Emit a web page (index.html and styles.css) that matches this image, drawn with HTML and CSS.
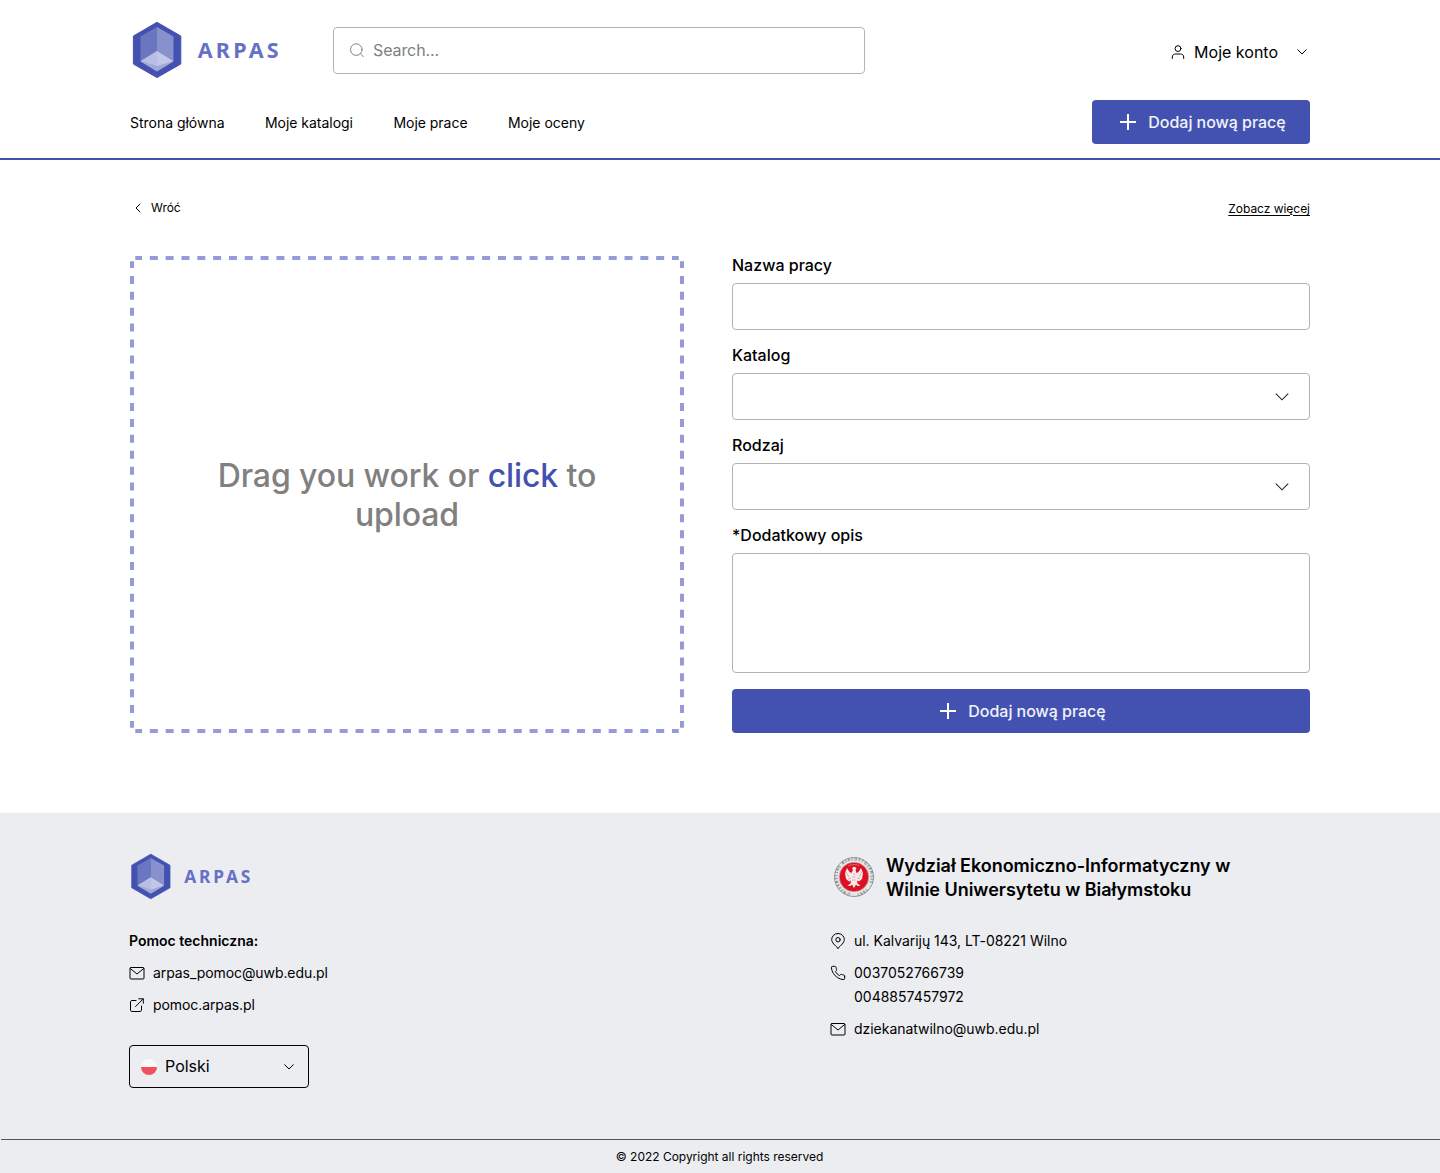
FILE: index.html
```html
<!DOCTYPE html>
<html lang="pl">
<head>
<meta charset="utf-8">
<title>ARPAS</title>
<link rel="stylesheet" href="styles.css">
</head>
<body>
<svg class="sprite" aria-hidden="true">
  <symbol id="chevron" viewBox="0 0 16 16"><path d="M3.700 5.700 8 10 12.300 5.700"/></symbol>
  <symbol id="mail" viewBox="0 0 16 16"><rect x="1" y="2.500" width="14" height="11.500" rx="1"/><path d="M1.300 3.500 8 9l6.700-5.500"/></symbol>
  <symbol id="plus" viewBox="0 0 16 16"><path d="M8 0v16M0 8h16"/></symbol>
  <symbol id="logo" viewBox="0 0 150 58">
    <path fill="#4352b0" stroke="#4352b0" stroke-linejoin="round" d="M27 1.300 50.800 15v28L27 56.600 3.400 43V15Z"/>
    <path fill="#6b76c1" d="M27 6 10.500 15.500V40L27 30Z"/>
    <path fill="#8890ce" d="M27 6 43.500 15.500V40L27 30Z"/>
    <path fill="#a2a9d9" d="M27 30 10.500 40.500 27 50.500 43.500 40.500Z"/>
    <path fill="#b9bee2" d="M27 30 10.500 40 27 45Z"/>
    <path fill="#c3c7e7" d="M27 30 43.500 40 27 45Z"/>
  </symbol>
</svg>

<header class="header">
  <div class="container">
    <div class="header-top">
      <svg class="logo" viewBox="0 0 150 58"><use href="#logo"/><text class="logo-text" x="67.700" y="36.700" textLength="81">ARPAS</text></svg>
      <div class="search">
        <svg class="icon" viewBox="0 0 16 16"><circle cx="7.300" cy="7.600" r="5.800"/><path d="m11.500 11.800 2.900 2.900"/></svg>
        <span>Search...</span>
      </div>
      <div class="account">
        <svg class="icon" viewBox="0 0 16 16"><circle cx="8" cy="4.600" r="2.900"/><path d="M2.300 14.500V13c0-2 1.500-3 3.200-3h5c1.700 0 3.200 1 3.200 3v1.500"/></svg>
        <span>Moje konto</span>
        <svg class="icon account-arrow"><use href="#chevron"/></svg>
      </div>
    </div>
    <div class="header-bottom">
      <nav class="nav"><a>Strona główna</a><a>Moje katalogi</a><a>Moje prace</a><a>Moje oceny</a></nav>
      <button class="button button-header"><svg class="plus"><use href="#plus"/></svg><span>Dodaj nową pracę</span></button>
    </div>
  </div>
</header>

<main class="container main">
  <div class="links">
    <a class="back"><svg class="icon" viewBox="0 0 16 16"><path d="M10 4 6 8l4 4"/></svg><span>Wróć</span></a>
    <a class="more">Zobacz więcej</a>
  </div>
  <div class="columns">
    <div class="dropzone">
      <svg class="dashes" viewBox="0 0 554 477">
        <path class="dash-x" d="M5.300 2H548.700M5.300 475H548.700"/>
        <path class="dash-y" d="M2 5.300V471.700M552 5.300V471.700"/>
      </svg>
      <p>Drag you work or <b>click</b> to upload</p>
    </div>
    <form class="form">
      <label>Nazwa pracy</label>
      <div class="field"></div>
      <label>Katalog</label>
      <div class="field"><svg class="select-arrow"><use href="#chevron"/></svg></div>
      <label>Rodzaj</label>
      <div class="field"><svg class="select-arrow"><use href="#chevron"/></svg></div>
      <label>*Dodatkowy opis</label>
      <div class="field area"></div>
      <button type="button" class="button"><svg class="plus"><use href="#plus"/></svg><span>Dodaj nową pracę</span></button>
    </form>
  </div>
</main>

<footer class="footer">
  <div class="footer-main">
    <section class="support">
      <svg class="footer-logo" viewBox="0 0 150 58"><use href="#logo"/><text class="logo-text" x="68.500" y="36.700" textLength="82">ARPAS</text></svg>
      <h3>Pomoc techniczna:</h3>
      <div class="contact"><svg class="icon"><use href="#mail"/></svg><span class="support-link">arpas_pomoc@uwb.edu.pl</span></div>
      <div class="contact"><svg class="icon" viewBox="0 0 16 16"><path d="M7 3.500H2.800c-.7 0-1.300.6-1.300 1.300v8.400c0 .7.6 1.300 1.300 1.300h8.400c.7 0 1.300-.6 1.300-1.300V9M9.800 1.800h4.500v4.500M14.100 2 6.500 9.600"/></svg><span class="support-link">pomoc.arpas.pl</span></div>
      <div class="language">
        <svg class="flag" viewBox="0 0 16 16"><path fill="#f9f9f9" d="M0 8a8 8 0 0 1 16 0Z"/><path fill="#f05060" d="M0 8a8 8 0 0 0 16 0Z"/></svg>
        <span>Polski</span>
        <svg class="icon"><use href="#chevron"/></svg>
      </div>
    </section>
    <section class="faculty">
      <div class="faculty-head">
        <svg class="crest" viewBox="0 0 40 40">
          <defs><path id="ring" d="M20 36.600a16.600 16.600 0 1 1 .1 0"/></defs>
          <circle cx="20" cy="20" r="19.500" fill="#e8e8e9" stroke="#999"/>
          <text class="crest-text"><textPath href="#ring" textLength="101">· UNIVERSITAS BIALOSTOCENSIS · 1997</textPath></text>
          <circle cx="20" cy="20" r="14.800" fill="#dc1022" stroke="#bbb" stroke-width=".7"/>
          <path fill="#f6e9e8" d="m18 11 2-1.500 2.500 1.500-1 2 1 3 2-1 2.500-4 2 5-1 6-3 2.500-2-1 .5 3 3 2-3 .5-1.500-1.500L20 31l-2-3.500-1.500 1.500-3-.5 3-2 .5-3-2 1-3-2.500-1-6 2-5 2.500 4 2 1 1.500-3Z"/>
          <path fill="none" stroke="#d98087" stroke-width=".6" d="m12 15 3 5M28 15l-3 5M14 22l3-1M26 22l-3-1M19 17h2M18.500 20h3M18.500 23h3"/>
          <path fill="none" stroke="#f0a0a0" stroke-dasharray="1 .6" d="M14.500 8.800q5.500-2.600 11 0"/>
        </svg>
        <h2>Wydział Ekonomiczno-Informatyczny w<br>Wilnie Uniwersytetu w Białymstoku</h2>
      </div>
      <div class="contact"><svg class="icon" viewBox="0 0 16 16"><path d="M8 15.300C5 12.300 1.700 9.700 1.700 6.500a6.300 6 0 0 1 12.600 0C14.300 9.700 11 12.300 8 15.300Z"/><circle cx="8" cy="6.700" r="2.200"/></svg><span>ul. Kalvarijų 143, LT-08221 Wilno</span></div>
      <div class="contact"><svg class="icon" viewBox="0 0 24 24"><path class="phone" d="M22 16.920v3a2 2 0 0 1-2.180 2 19.790 19.790 0 0 1-8.630-3.070 19.500 19.500 0 0 1-6-6 19.790 19.790 0 0 1-3.070-8.670A2 2 0 0 1 4.110 2h3a2 2 0 0 1 2 1.720 12.840 12.840 0 0 0 .7 2.810 2 2 0 0 1-.45 2.110L8.090 9.910a16 16 0 0 0 6 6l1.270-1.270a2 2 0 0 1 2.110-.45 12.840 12.840 0 0 0 2.810.7A2 2 0 0 1 22 16.920z"/></svg><span class="phones">0037052766739<br>0048857457972</span></div>
      <div class="contact"><svg class="icon"><use href="#mail"/></svg><span>dziekanatwilno@uwb.edu.pl</span></div>
    </section>
  </div>
  <div class="copyright">© 2022 Copyright all rights reserved</div>
</footer>
</body>
</html>
```

FILE: styles.css
```css
* { box-sizing: border-box; }
body { margin: 0; background: #fff; color: #000; font-family: Inter, "Liberation Sans", sans-serif; font-size: 14px; }
h2, h3, p { margin: 0; }
svg { display: block; flex: none; }
.sprite { position: absolute; width: 0; height: 0; }
.container { width: 1180px; margin: 0 auto; }
.icon { width: 16px; height: 16px; fill: none; stroke: currentColor; stroke-width: 1; stroke-linecap: round; stroke-linejoin: round; }
.phone { stroke-width: 1.5; }

.header { height: 160px; padding-top: 20px; border-bottom: 2px solid #4352b0; }
.header-top { display: flex; align-items: center; height: 60px; }
.logo { width: 150px; height: 58px; overflow: visible; }
.logo-text { font: 700 21.5px "Noto Sans", sans-serif; fill: #6670c6; }
.search { display: flex; align-items: center; gap: 8px; width: 532px; height: 47px; margin: 1px 0 0 53px; padding: 0 15px 1px; border: 1px solid #b3b3b3; border-radius: 4px; color: #808080; font-size: 16px; letter-spacing: -.1px; }
.account { display: flex; align-items: center; gap: 8px; margin: 3px 0 0 auto; font-size: 16px; }
.account-arrow { margin-left: 8px; }
.header-bottom { display: flex; align-items: center; justify-content: space-between; margin-top: 20px; height: 44px; }
.nav { display: flex; gap: 40.4px; letter-spacing: -.02px; }
.button { display: flex; align-items: center; justify-content: center; gap: 12px; height: 44px; padding: 0 0 0 4px; border: 0; border-radius: 4px; background: #4352b0; color: #f2f2fa; font: 500 16px Inter, "Liberation Sans", sans-serif; letter-spacing: -.03px; }
.button span { padding-bottom: 1px; }
.button-header { width: 218px; }
.plus { width: 16px; height: 16px; stroke: #fff; stroke-width: 2; }

.main { height: 653px; padding-top: 40px; }
.links { display: flex; justify-content: space-between; height: 16px; font-size: 12px; line-height: 16px; letter-spacing: -.03px; }
.back { display: flex; gap: 5px; }
.more { height: 16px; line-height: 17px; text-decoration: underline; text-underline-offset: 2px; }
.columns { display: flex; gap: 48px; margin-top: 40px; }
.dropzone { display: grid; place-items: center; width: 554px; height: 477px; }
.dropzone > * { grid-area: 1 / 1; }
.dashes { width: 554px; height: 477px; fill: none; stroke: #959bd8; stroke-width: 4; }
.dash-x { stroke-dasharray: 8 7.823; stroke-dashoffset: 1.3; }
.dash-y { stroke-dasharray: 8 7.897; stroke-dashoffset: 1.3; }
.dropzone p { width: 400px; color: #808080; font-size: 32px; font-weight: 500; line-height: 39px; letter-spacing: -.1px; text-align: center; }
.dropzone b { color: #4352b0; font-weight: 500; }
.form { display: flex; flex-direction: column; width: 578px; }
.form label { height: 19px; margin-bottom: 8px; font-size: 16px; font-weight: 500; line-height: 19px; }
.field { display: flex; align-items: center; justify-content: flex-end; height: 47px; margin-bottom: 16px; padding-right: 16px; border: 1px solid #b3b3b3; border-radius: 4px; }
.area { height: 120px; }
.select-arrow { width: 22px; height: 22px; fill: none; stroke: #222; stroke-width: .75; stroke-linecap: round; }

.footer { height: 360px; background: #ecedf1; }
.footer-main { display: flex; width: 1182px; height: 326px; margin: 0 auto; padding-top: 40px; }
.support { width: 701px; }
.footer-logo { width: 121px; height: 47px; margin-bottom: 29px; overflow: visible; }
.footer h3 { margin-bottom: 8px; font-size: 14px; font-weight: 600; line-height: 24px; }
.contact { display: flex; gap: 8px; margin-bottom: 8px; line-height: 24px; letter-spacing: -.03px; }
.contact .icon { margin-top: 4px; }
.support-link { letter-spacing: -.08px; }
.phones { letter-spacing: 0; }
.language { display: flex; align-items: center; gap: 8px; width: 180px; height: 43px; margin-top: 28px; padding: 0 11px; border: 1px solid #000; border-radius: 4px; font-size: 16px; }
.language span { padding-bottom: 1px; }
.language .icon { margin-left: auto; }
.flag { width: 16px; height: 16px; }
.faculty-head { display: flex; gap: 12px; height: 76px; padding: 1px 0 0 4px; }
.crest { width: 40px; height: 40px; margin-top: 3px; }
.crest-text { font: 700 4px "Noto Sans", sans-serif; fill: #777; }
.faculty h2 { font-size: 18px; font-weight: 600; line-height: 24px; letter-spacing: -.03px; white-space: nowrap; }
.copyright { height: 34px; margin-left: 1px; padding-right: 2px; border-top: 1px solid #555; font-size: 12px; line-height: 34px; letter-spacing: -.02px; text-align: center; }
```
